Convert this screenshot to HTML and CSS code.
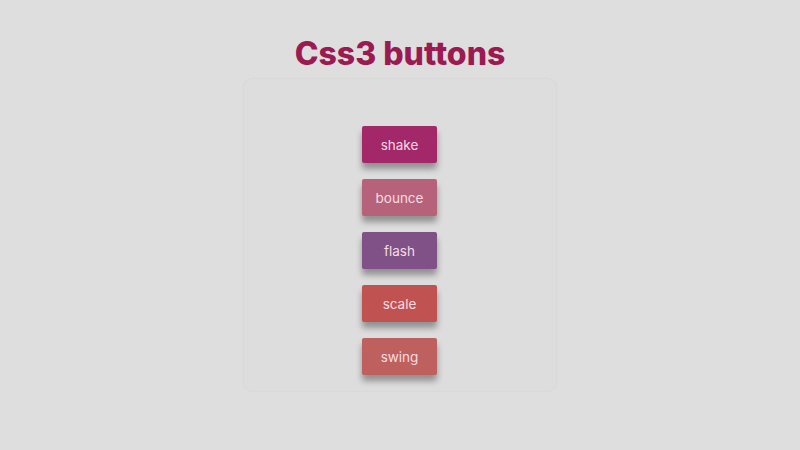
FILE: index.html
```html
<!DOCTYPE html>
<html lang="en">
<head>
    <meta charset="UTF-8">
    <meta name="viewport" content="width=device-width, initial-scale=1.0">
    <title>Css3 buttons</title>
    <link rel="stylesheet" href="styles.css">
</head>
<body>
    <h1 class="title">Css3 buttons</h1>

    <div class="panel">
        <button class="btn shake">shake</button>
        <button class="btn bounce">bounce</button>
        <button class="btn flash">flash</button>
        <button class="btn scale">scale</button>
        <button class="btn swing">swing</button>
    </div>
</body>
</html>
```

FILE: styles.css
```css
body {
    margin: 0;
    padding: 0;
    background-color: #dedede;
    font-family: 'Inter', 'Open Sans', sans-serif;
    height: 100vh;
    display: flex;
    flex-direction: column;
    align-items: center;
    overflow: hidden;
}
.title {
    margin: 34px 0 0 0;
    font-size: 32px;
    font-weight: 800;
    letter-spacing: 0;
    line-height: 40px;
    color: #9b1a52;
}
.panel {
    margin-top: 5px;
    width: 312px;
    height: 312px;
    box-sizing: border-box;
    padding-top: 47px;
    border-radius: 8px;
    background-color: #dddddd;
    box-shadow: 0 0 2px rgba(0, 0, 0, 0.08);
    display: flex;
    flex-direction: column;
    align-items: center;
    gap: 16px;
}
.btn {
    width: 75px;
    height: 37px;
    margin-left: -1px;
    padding: 0;
    border: none;
    border-radius: 2px;
    font-family: 'Inter', 'Open Sans', sans-serif;
    font-size: 13.5px;
    color: #f8dbe2;
    cursor: pointer;
    box-shadow: 0 6px 6px rgba(0, 0, 0, 0.35);
}
.shake { background-color: #a3286a; }
.bounce { background-color: #b6627b; }
.flash { background-color: #7f5186; }
.scale { background-color: #c05352; }
.swing { background-color: #be615e; }
```
